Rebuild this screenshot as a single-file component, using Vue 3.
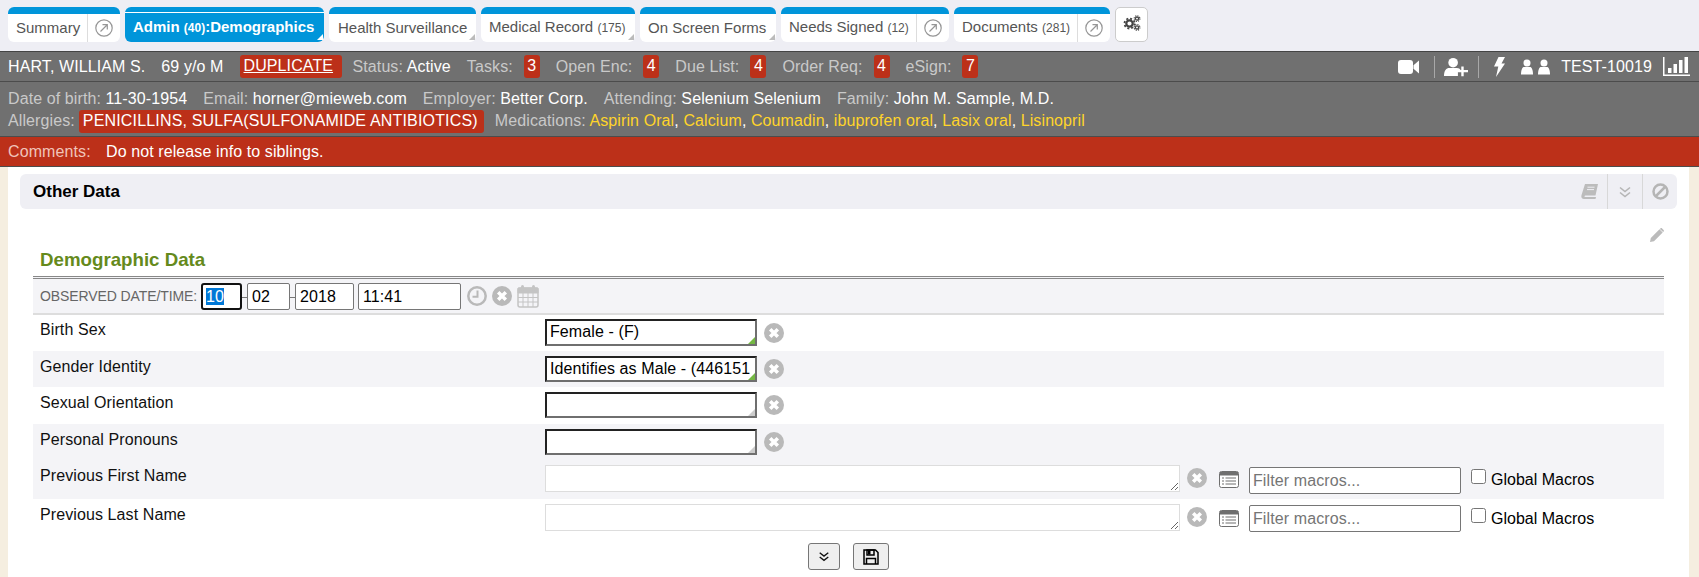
<script setup>
const tabs = [
  { label: 'Summary', ext: true, cls: 't-summary' },
  { label: 'Admin ', count: '(40)', after: ':Demographics', active: true, corner: true, cls: 't-admin' },
  { label: 'Health Surveillance', corner: true, cls: 't-health' },
  { label: 'Medical Record ', count: '(175)', corner: true, cls: 't-medical' },
  { label: 'On Screen Forms', corner: true, cls: 't-forms' },
  { label: 'Needs Signed ', count: '(12)', ext: true, cls: 't-needs' },
  { label: 'Documents ', count: '(281)', ext: true, cls: 't-docs' }
]
const stats = [
  ['Tasks:', 3], ['Open Enc:', 4], ['Due List:', 4], ['Order Req:', 4], ['eSign:', 7]
]
const info = [
  ['Date of birth:', '11-30-1954'], ['Email:', 'horner@mieweb.com'], ['Employer:', 'Better Corp.'],
  ['Attending:', 'Selenium Selenium'], ['Family:', 'John M. Sample, M.D.']
]
const meds = ['Aspirin Oral', 'Calcium', 'Coumadin', 'ibuprofen oral', 'Lasix oral', 'Lisinopril']
const rows = [
  { label: 'Birth Sex', value: 'Female - (F)', filled: true, cls: 'r1' },
  { label: 'Gender Identity', value: 'Identifies as Male - (446151', filled: true, cls: 'r2 alt' },
  { label: 'Sexual Orientation', value: '', cls: 'r3' },
  { label: 'Personal Pronouns', value: '', cls: 'r4 alt' }
]
const notes = [
  { label: 'Previous First Name', cls: 'r5 alt' },
  { label: 'Previous Last Name', cls: 'r6' }
]
</script>

<template>
  <div class="page">
    <nav class="tabs">
      <div v-for="t in tabs" :key="t.label" class="tab" :class="[t.cls, { active: t.active }]">
        <span class="tab-text">{{ t.label }}<small v-if="t.count">{{ t.count }}</small>{{ t.after }}</span>
        <span v-if="t.corner" class="corner"></span>
        <span v-if="t.ext" class="ext">
          <svg width="18" height="18" viewBox="0 0 18 18" fill="none" stroke="#969696" stroke-width="1.2">
            <circle cx="9" cy="9" r="8.2" />
            <path d="M5.5 12.5 12 6M7.5 5.7h4.8v4.8" />
          </svg>
        </span>
      </div>
      <button class="gear-btn" aria-label="Settings">
        <svg width="18" height="16" viewBox="0 0 18 16" fill="none" stroke="#444">
          <circle cx="6.5" cy="8.5" r="3.2" stroke-width="2.2" />
          <circle cx="6.5" cy="8.5" r="5" stroke-width="1.8" stroke-dasharray="2 1.93" />
          <circle cx="14" cy="3.6" r="1.6" stroke-width="1.3" />
          <circle cx="14" cy="3.6" r="2.9" stroke-width="1.1" stroke-dasharray="1.2 1.08" />
          <circle cx="14" cy="12.4" r="1.6" stroke-width="1.3" />
          <circle cx="14" cy="12.4" r="2.9" stroke-width="1.1" stroke-dasharray="1.2 1.08" />
        </svg>
      </button>
    </nav>

    <header class="patient">
      <div class="p-row1">
        <span class="wht">HART, WILLIAM S.</span>
        <span class="wht">69 y/o M</span>
        <a class="dup">DUPLICATE</a>
        <span class="status">Status: <b>Active</b></span>
        <span v-for="s in stats" :key="s[0]" class="stat">{{ s[0] }}<em>{{ s[1] }}</em></span>
        <span class="p-right">
          <svg class="i-video" width="21" height="16" viewBox="0 0 21 16" fill="#fff"><rect x="0" y="1" width="15" height="14" rx="3" /><path d="M15.500 6.200 21 1.500v13l-5.500-4.700z" /></svg>
          <i class="bar-sep"></i>
          <svg class="i-add" width="24" height="20" viewBox="0 0 25 20" fill="#fff"><circle cx="9.5" cy="5.5" r="5" /><path d="M0 19.5c0-6 2.5-8.5 5.500-8.500h8c2 0 3 .8 3.800 2v2.200h-2.800v4.300z" /><path d="M18 9.500h2.500v3.500H25v2.400h-4.500v4.300H18v-4.300h-3.500V13H18z" /></svg>
          <i class="bar-sep"></i>
          <svg class="i-bolt" width="11" height="20" viewBox="0 0 11 20" fill="#fff"><path d="M4.500 0H11L7.500 6.500H11L2 20l2.300-10.500H0z" /></svg>
          <svg class="i-users" width="29" height="16" viewBox="0 0 29 16" fill="#fff"><circle cx="6" cy="4" r="3.500" /><path d="M0 15.500c0-5 1.500-7.500 3-7.500h6c1.500 0 3 2.500 3 7.500z" /><circle cx="23" cy="4" r="3.500" /><path d="M17 15.500c0-5 1.500-7.500 3-7.500h6c1.500 0 3 2.500 3 7.500z" /></svg>
          <span class="wht test">TEST-10019</span>
          <svg width="27" height="19" viewBox="0 0 27 19" fill="#fff"><path d="M0 0h1.500v17.500H27V19H0z" /><rect x="5" y="11" width="3.500" height="5" /><rect x="10.500" y="7" width="3.500" height="9" /><rect x="16" y="3" width="3.500" height="13" /><rect x="21.500" y="0" width="3.500" height="16" /></svg>
        </span>
      </div>
      <div class="p-info">
        <div class="p-line">
          <span v-for="i in info" :key="i[0]" class="inf">{{ i[0] }} <b>{{ i[1] }}</b></span>
        </div>
        <div class="p-line p-line2">
          <span class="lbl">Allergies:</span>
          <span class="allergy">PENICILLINS, SULFA(SULFONAMIDE ANTIBIOTICS)</span>
          <span class="lbl meds">Medications: <template v-for="(m, n) in meds" :key="m"><span class="med">{{ m }}</span><b v-if="n < meds.length - 1">, </b></template></span>
        </div>
      </div>
      <div class="comments"><span class="c-lbl">Comments:</span><span>Do not release info to siblings.</span></div>
    </header>

    <main class="shell">
      <div class="content">
        <section class="panel">
          <h2>Other Data</h2>
          <div class="panel-tools">
            <svg class="book" width="17" height="15" viewBox="0 0 17 15" fill="#bcbcbc"><path d="M4 0h13l-2.500 11.500H4.500C3.300 11.500 3 13 4.300 13H15l-.5 2H3C1 15 0 13.500.4 11.500z" /><path d="M6.500 3.200h7M6 5.600h7" stroke="#efeff4" stroke-width="1" /></svg>
            <span class="p-cell">
              <svg width="14" height="12" viewBox="0 0 14 12" fill="none" stroke="#b5b5b5" stroke-width="1.600"><path d="M2 1.500l5 4 5-4M2 6.500l5 4 5-4" /></svg>
            </span>
            <span class="p-cell">
              <svg width="17" height="17" viewBox="0 0 17 17" fill="none" stroke="#b5b5b5" stroke-width="2.500"><circle cx="8.500" cy="8.500" r="7" /><path d="M3.500 13.500l10-10" /></svg>
            </span>
          </div>
        </section>

        <div class="pencil-row">
          <svg width="14" height="14" viewBox="0 0 14 14" fill="#bbb"><path d="M0 14l.8-4L9.500 1.300l3.200 3.200L4 13.200zM10.400.4c.5-.5 1.200-.5 1.700 0l1.500 1.500c.5.500.5 1.200 0 1.700l-.5.500-3.200-3.200z" /></svg>
        </div>

        <form class="form" @submit.prevent>
          <h3>Demographic Data</h3>
          <div class="toolbar">
            <span class="obs">OBSERVED DATE/TIME:</span>
            <span class="dt dt-m focus"><mark>10</mark></span><i class="dash"></i>
            <span class="dt dt-d">02</span><i class="dash"></i>
            <span class="dt dt-y">2018</span>
            <span class="dt dt-t">11:41</span>
            <svg class="t-icon" width="20" height="20" viewBox="0 0 20 20" fill="none" stroke="#b9b9b9" stroke-width="2.500"><circle cx="10" cy="10" r="8.700" /><path d="M10.500 4.500v6.300H5.500" stroke-width="2" /></svg>
            <svg class="t-icon" width="20" height="20" viewBox="0 0 20 20"><circle cx="10" cy="10" r="10" fill="#b9b9b9" /><path d="M6.200 6.200l7.600 7.600M13.800 6.200l-7.600 7.600" stroke="#fff" stroke-width="3.500" /></svg>
            <svg class="t-icon" width="22" height="24" viewBox="0 0 22 24" fill="none" stroke="#c4c4c4"><rect x="1" y="4" width="20" height="19" rx="2" fill="#f4f4f7" stroke-width="1.500" /><path d="M1 4h20v5H1z" fill="#c4c4c4" /><path d="M1 13.500h20M1 18h20M6 9v14M11 9v14M16 9v14" stroke-width="1" /><rect x="4" y="1" width="3" height="6" rx="1.500" fill="#c4c4c4" stroke="none" /><rect x="15" y="1" width="3" height="6" rx="1.500" fill="#c4c4c4" stroke="none" /></svg>
          </div>

          <div v-for="r in rows" :key="r.label" class="row" :class="r.cls">
            <label>{{ r.label }}</label>
            <div class="ctl">
              <div class="pick" :class="{ filled: r.filled }">{{ r.value }}</div>
              <svg class="x" width="20" height="20" viewBox="0 0 20 20"><circle cx="10" cy="10" r="10" fill="#b9b9b9" /><path d="M6.200 6.200l7.600 7.600M13.800 6.200l-7.600 7.600" stroke="#fff" stroke-width="3.500" /></svg>
            </div>
          </div>

          <div v-for="n in notes" :key="n.label" class="row" :class="n.cls">
            <label>{{ n.label }}</label>
            <div class="ctl ctl-note">
              <textarea class="note"></textarea>
              <svg class="x2" width="20" height="20" viewBox="0 0 20 20"><circle cx="10" cy="10" r="10" fill="#b9b9b9" /><path d="M6.200 6.200l7.600 7.600M13.800 6.200l-7.600 7.600" stroke="#fff" stroke-width="3.500" /></svg>
              <svg class="macro" width="20" height="17" viewBox="0 0 20 17"><rect x=".5" y=".5" width="19" height="16" rx="2" fill="#fff" stroke="#6f6f6f" /><path d="M1 1h18v3.500H1z" fill="#6f6f6f" /><path d="M3 7h2M6.500 7H17M3 10h2M6.500 10H17M3 13h2M6.500 13H17" stroke="#6f6f6f" /></svg>
              <input class="filter" placeholder="Filter macros..." />
              <label class="global"><input type="checkbox" /><span>Global Macros</span></label>
            </div>
          </div>

          <div class="actions">
            <button type="button" class="act act-1" aria-label="Expand">
              <svg width="12" height="11" viewBox="0 0 14 12" fill="none" stroke="#111" stroke-width="1.500"><path d="M2 1.500l5 4 5-4M2 6.500l5 4 5-4" /></svg>
            </button>
            <button type="button" class="act act-2" aria-label="Save">
              <svg width="16" height="16" viewBox="0 0 16 16" fill="none" stroke="#000" stroke-width="1.500"><path d="M1 1h11.500L15 3.500V15H1z" /><path d="M4 1h7v5H4zM3.500 15V9.500h9V15" /><rect x="5" y="1.500" width="2.500" height="4" fill="#000" stroke="none" /></svg>
            </button>
          </div>
        </form>
      </div>
    </main>
  </div>
</template>

<style>
html, body { margin: 0; background: #fff; }
</style>

<style scoped>
.page { width: 1699px; height: 577px; overflow: hidden; font: 16px/20px "Liberation Sans", Arial, sans-serif; letter-spacing: .1px; color: #111; display: flex; flex-direction: column; }

.tabs { height: 51px; box-sizing: border-box; background: #eeeef4; padding: 7px 8px 0; display: flex; gap: 5px; align-items: flex-start; flex: none; letter-spacing: 0; }
.tab { position: relative; height: 35px; box-sizing: border-box; background: #fff; border-top: 7px solid #0095da; border-radius: 6px; display: flex; align-items: center; color: #555; font-size: 15px; white-space: nowrap; }
.tab-text { padding: 0 7px 0 8px; margin-top: -1px; }
.t-health .tab-text { padding-left: 9px; }
.tab small { font-size: 12px; }
.tab.active { background: #0095da; color: #fff; font-weight: 700; border-radius: 6px; }
.tab.active::before { content: ""; position: absolute; left: 0; right: 0; top: -2px; height: 1px; background: #fff; }
.t-summary { width: 112px; }
.t-admin { width: 199px; }
.t-health { width: 147px; }
.t-medical { width: 154px; }
.t-forms { width: 136px; }
.t-needs { width: 168px; }
.t-docs { width: 156px; }
.ext { margin-left: auto; align-self: stretch; width: 33px; box-sizing: border-box; padding-right: 1px; border-left: 1px solid #ddd; display: flex; align-items: center; justify-content: center; }
.corner { position: absolute; right: 1px; bottom: 2px; width: 0; height: 0; border-left: 6px solid transparent; border-bottom: 6px solid #bbb; }
.active .corner { border-bottom-color: #fff; }
.gear-btn { width: 33px; height: 35px; box-sizing: border-box; padding: 0 0 4px; background: #fff; border: 1px solid #ccc; border-radius: 5px; display: flex; align-items: center; justify-content: center; }

.patient { flex: none; background: #707070; color: #c9c9c9; border-top: 1px solid #444; }
.patient b { font-weight: 400; color: #fff; }
.wht { color: #fff; }
.p-row1 { height: 30px; box-sizing: border-box; padding: 0 8px; display: flex; align-items: center; gap: 16px; border-bottom: 1px solid #4c4c4c; white-space: nowrap; }
.dup { background: #bc3019; color: #fff; text-decoration: underline; border-radius: 3px; height: 23px; line-height: 21px; width: 102px; box-sizing: border-box; padding-left: 4px; margin-right: -5px; }
.stat { display: flex; align-items: center; gap: 11px; }
.stat em { font-style: normal; color: #fff; background: #bc3019; border-radius: 3px; width: 16px; height: 23px; text-align: center; line-height: 21px; }
.p-right { margin-left: auto; display: flex; align-items: center; margin-right: 1px; }
.i-video { margin-right: 15px; }
.bar-sep { width: 1px; height: 22px; background: #a8a8a8; margin-right: 9px; }
.i-add { margin-right: 10px; }
.i-bolt { margin: 0 16px 0 6px; }
.i-users { margin-right: 11px; }
.test { margin-right: 11px; }

.p-info { height: 54px; box-sizing: border-box; padding: 6px 8px 0; }
.p-line { display: flex; height: 22px; align-items: center; gap: 16px; white-space: nowrap; }
.p-line2 { gap: 0; margin-top: 0; }
.allergy { background: #bc3019; color: #fff; border-radius: 3px; height: 23px; line-height: 22px; padding: 0 4px; margin: 0 11px 0 4px; width: 405px; box-sizing: border-box; white-space: nowrap; letter-spacing: .17px; }
.med { color: #ffd42a; }
.comments { height: 31px; box-sizing: border-box; background: #bc3019; border-top: 1px solid #4c4c4c; border-bottom: 1px solid #4c4c4c; color: #fff; padding: 0 8px; display: flex; align-items: center; }
.c-lbl { color: #f0c4ba; width: 98px; }

.shell { flex: 1; background: #f5eee0; padding: 0 10px 0 8px; display: flex; }
.content { flex: 1; background: #fff; padding-top: 7px; }
.panel { height: 35px; margin: 0 12px; background: #efeff4; border-radius: 6px; display: flex; align-items: center; padding-left: 13px; }
.panel h2 { margin: 0; font-size: 17px; font-weight: 700; color: #000; letter-spacing: 0; }
.panel-tools { margin-left: auto; display: flex; align-items: center; height: 100%; }
.book { margin-right: 9px; }
.p-cell { height: 100%; width: 35px; box-sizing: border-box; border-left: 1px solid #d8d8d8; display: flex; align-items: center; justify-content: center; }

.pencil-row { margin-right: 25px; padding-top: 19px; display: flex; justify-content: flex-end; height: 14px; }

.form { margin: 0 25px; }
.form h3 { margin: 0; padding-left: 7px; height: 34px; padding-top: 5px; box-sizing: border-box; line-height: 26px; font-size: 18.72px; font-weight: 700; color: #658a1c; letter-spacing: 0; }
.toolbar { height: 39px; box-sizing: border-box; border-top: 3px double #888; border-bottom: 2px solid #ddd; background: #f4f4f7; display: flex; align-items: center; padding-left: 7px; }
.obs { font-size: 14px; color: #666; margin-right: 5px; width: 156px; white-space: nowrap; letter-spacing: -.1px; }
.dt { height: 27px; box-sizing: border-box; background: #fff; border: 1px solid #767676; border-radius: 2px; padding-left: 4px; line-height: 25px; color: #000; display: block; }
.dt-m { width: 41px; }
.dt-d { width: 43px; }
.dt-y { width: 59px; margin-right: 4px; }
.dt-t { width: 103px; margin-right: 6px; }
.focus { border: 2px solid #111; border-radius: 3px; line-height: 23px; padding-left: 3px; }
mark { background: #0078d7; color: #fff; }
.dash { width: 5px; height: 1px; background: #777; margin-top: 2px; }
.t-icon { margin-right: 5px; flex: none; }

.row { display: grid; grid-template-columns: 512px 1fr; box-sizing: border-box; }
.row > label { padding: 5px 0 0 7px; }
.alt { background: #f4f4f7; }
.r1 { height: 36px; }
.r2 { height: 36px; }
.r3 { height: 37px; }
.r4 { height: 37px; }
.r5 { height: 38px; }
.r6 { height: 40px; }
.r2 > label, .r3 > label, .r4 > label, .r6 > label { padding-top: 6px; }
.ctl { display: flex; align-items: center; gap: 7px; padding-top: 4px; height: 26px; }
.r1 .ctl { height: 27px; }
.r2 .ctl, .r3 .ctl, .r4 .ctl { padding-top: 5px; }
.pick { position: relative; width: 212px; height: 100%; box-sizing: border-box; background: #fff; border: 2px solid #222; border-right-color: #6f6f6f; border-bottom-color: #6f6f6f; padding-left: 3px; line-height: 21px; color: #000; white-space: nowrap; overflow: hidden; }
.pick::after { content: ""; position: absolute; right: 0; bottom: 0; border-left: 7px solid transparent; border-bottom: 7px solid #ccc; }
.pick.filled::after { border-bottom-color: #74b843; }
.x { flex: none; }

.ctl-note { gap: 0; align-items: flex-start; height: auto; }
.r6 .ctl-note { padding-top: 5px; }
.note { width: 635px; height: 27px; box-sizing: border-box; margin: 0; border: 1px solid #ddd; background: #fff; outline: none; display: block; flex: none; }
.x2 { margin: 3px 0 0 7px; flex: none; }
.macro { margin: 6px 0 0 12px; flex: none; }
.filter { width: 212px; height: 27px; box-sizing: border-box; margin: 2px 0 0 10px; border: 1px solid #767676; border-radius: 2px; padding: 0 3px; font: 16px "Liberation Sans", Arial, sans-serif; letter-spacing: .1px; background: #fff; outline: none; flex: none; }
.r6 .filter { margin-top: 1px; }
.global { display: flex; align-items: flex-start; gap: 5px; margin: 4px 0 0 10px; white-space: nowrap; color: #000; padding: 0 !important; }
.global input { width: 15px; height: 15px; margin: 0; }
.global span { margin-top: 1px; letter-spacing: 0; }

.actions { display: flex; justify-content: flex-start; gap: 13px; padding-left: 775px; margin-top: 4px; }
.act { height: 27px; box-sizing: border-box; background: #efefef; border: 1px solid #767676; border-radius: 3px; padding: 0; display: flex; align-items: center; justify-content: center; }
.act-1 { width: 32px; }
.act-2 { width: 36px; }
</style>
